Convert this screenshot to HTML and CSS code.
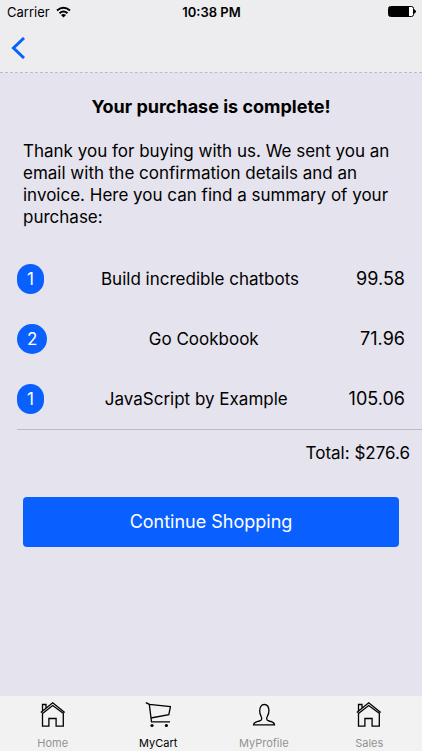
FILE: index.html
```html
<!DOCTYPE html>
<html lang="en">
<head>
<meta charset="utf-8">
<meta name="viewport" content="width=device-width, initial-scale=1">
<title>Purchase complete</title>
<link rel="stylesheet" href="styles.css">
</head>
<body>
<header class="header">
  <div class="status">
    <span class="carrier">Carrier
      <svg width="15" height="12" viewBox="0 0 15 12" fill="none" stroke="#000" stroke-width="2"><path d="M1 4.5Q7.500-1 14 4.500M3.500 7.300Q7.500 3.800 11.500 7.300"/><path d="M7.500 11.500L5 9Q7.500 7 10 9Z" fill="#000" stroke="none"/></svg>
    </span>
    <span class="clock">10:38 PM</span>
    <svg class="battery" width="28" height="12" viewBox="0 0 28 12"><rect x=".5" y=".5" width="25" height="10" rx="2" fill="#fff" stroke="#000"/><path d="M1 1h20v9H1zM26 3l2 2v1l-2 2z"/></svg>
  </div>
  <nav class="navbar">
    <button class="back" type="button" aria-label="Back">
      <svg width="14" height="22" viewBox="0 0 14 22" fill="none" stroke="#0a60ff" stroke-width="3"><path d="M13 1L2.500 11 13 21"/></svg>
    </button>
  </nav>
</header>
<main class="content">
  <h1 class="title">Your purchase is complete!</h1>
  <p class="message">Thank you for buying with us. We sent you an email with the confirmation details and an invoice. Here you can find a summary of your purchase:</p>
  <ul class="items">
    <li class="item"><span class="badge">1</span><span class="name">Build incredible chatbots</span><span class="price">99.58</span></li>
    <li class="item"><span class="badge">2</span><span class="name">Go Cookbook</span><span class="price">71.96</span></li>
    <li class="item"><span class="badge">1</span><span class="name">JavaScript by Example</span><span class="price">105.06</span></li>
  </ul>
  <p class="total">Total: $276.6</p>
  <button class="continue" type="button">Continue Shopping</button>
</main>
<nav class="tabs">
  <a class="tab" href="#home">
    <svg class="icon" viewBox="0 0 26 26"><path d="M.8 10.500L12.700.8l12 9.700M2.500 11.500L12.700 3.600l10.800 7.900M2.500 9V2.500H6v3.600M2.500 10.500v13.700h6.400v-7.700h7.200v7.700h7.200V10.500"/></svg>
    Home
  </a>
  <a class="tab active" href="#cart" aria-current="page">
    <svg class="icon" viewBox="0 0 26 26"><path d="M.8.600l3.500 1.700 2.200 17.500H25M4.300 2.300l21.200 2.200-1.700 8.100L5.800 16"/><circle cx="7" cy="23.500" r="1.600"/><circle cx="21.400" cy="23.500" r="1.600"/></svg>
    MyCart
  </a>
  <a class="tab" href="#profile">
    <svg class="icon" viewBox="0 0 26 26"><path d="M2.500 22.800c0-2.300 3-3.200 6-3.800 2-.4 2.400-1.200 2.200-2.700-.2-2-2-3.500-2-7.300 0-4 1.600-6.500 4.600-6.500s4.600 2.500 4.600 6.500c0 3.800-2 5.300-2.200 7.300-.2 1.500.2 2.300 2.200 2.700 3 .6 5.600 1.500 5.600 3.800z"/></svg>
    MyProfile
  </a>
  <a class="tab" href="#sales">
    <svg class="icon" viewBox="0 0 26 26"><path d="M.8 10.500L12.700.8l12 9.700M2.500 11.500L12.700 3.600l10.800 7.900M2.500 9V2.500H6v3.600M2.500 10.500v13.700h6.400v-7.700h7.200v7.700h7.200V10.500"/></svg>
    Sales
  </a>
</nav>
</body>
</html>
```
FILE: styles.css
```css
* {
  box-sizing: border-box;
}

body {
  margin: 0;
  min-height: 100vh;
  display: flex;
  flex-direction: column;
  background: #e5e3ed;
  color: #000;
  font: 17px/22px Inter, "Liberation Sans", sans-serif;
}

.header {
  background: #ededf0;
  border-bottom: 1px dashed #bcbbc2;
}

.status {
  display: grid;
  grid-template-columns: 1fr auto 1fr;
  align-items: center;
  height: 24px;
  padding: 0 6px 0 7px;
  font-size: 13px;
}

.carrier {
  display: flex;
  align-items: center;
  gap: 6px;
}

.clock {
  font-weight: 600;
}

.battery {
  justify-self: end;
}

.navbar {
  height: 48px;
  display: flex;
  align-items: center;
  padding: 0 11px;
}

.back {
  display: flex;
  padding: 0;
  border: 0;
  background: none;
}

.content {
  flex: 1;
  display: flex;
  flex-direction: column;
  padding-top: 23px;
}

.title {
  margin: 0 0 22px;
  font-size: 18px;
  font-weight: 700;
  text-align: center;
}

.message {
  margin: 0 23px 21px;
}

.items {
  margin: 0 0 0 17px;
  padding: 0;
  list-style: none;
  border-bottom: 1px solid #bcbbc2;
}

.item {
  display: flex;
  justify-content: space-between;
  align-items: center;
  height: 60px;
  padding-right: 17px;
}

.badge {
  padding: 4px 10px;
  border-radius: 15px;
  background: #0a60ff;
  color: #fff;
}

.price {
  font-size: 18px;
}

.total {
  margin: 12px 12px 33px;
  text-align: right;
}

.continue {
  margin: 0 23px;
  height: 50px;
  border: 0;
  border-radius: 4px;
  background: #0a60ff;
  color: #fff;
  font: inherit;
  font-size: 18px;
}

.tabs {
  display: grid;
  grid-template-columns: repeat(4, 1fr);
  height: 55px;
  background: #f2f2f2;
}

.tab {
  display: flex;
  flex-direction: column;
  align-items: center;
  gap: 8px;
  padding-top: 6px;
  color: #929292;
  font-size: 11px;
  line-height: 14px;
  text-decoration: none;
}

.tab.active {
  color: #000;
}

.icon {
  width: 26px;
  height: 26px;
  fill: none;
  stroke: #000;
  stroke-width: 1.3;
}

.icon circle {
  fill: #000;
  stroke: none;
}
```
